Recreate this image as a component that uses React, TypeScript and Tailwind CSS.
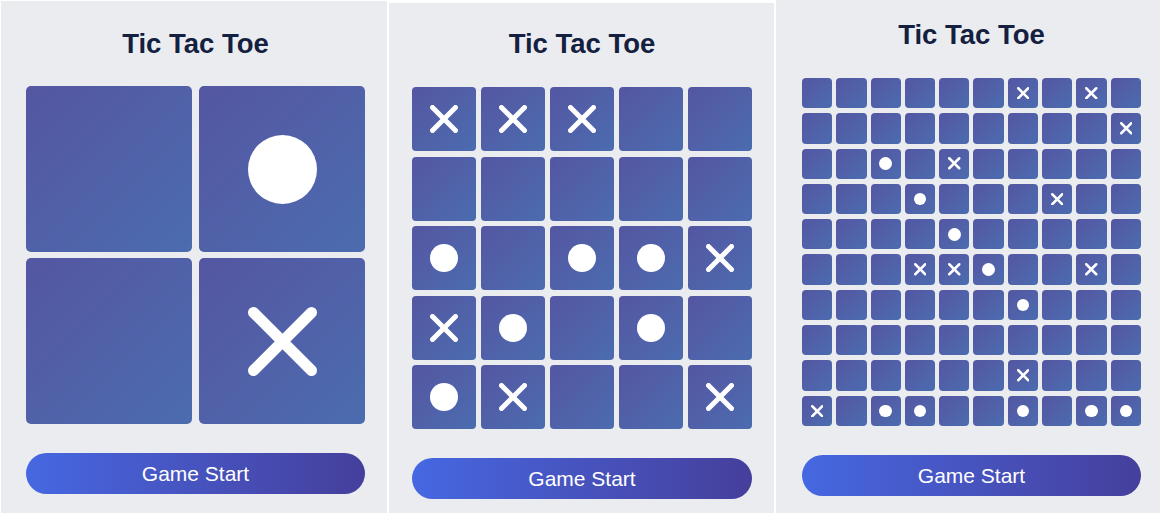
type Mark = '' | 'X' | 'O'

const board2: Mark[] = ['', 'O', '', 'X']

const board5: Mark[] = [
  'X', 'X', 'X', '', '',
  '', '', '', '', '',
  'O', '', 'O', 'O', 'X',
  'X', 'O', '', 'O', '',
  'O', 'X', '', '', 'X',
]

// 10x10 board, marks listed by [row, col]
const xs10 = [[0, 6], [0, 8], [1, 9], [2, 4], [3, 7], [5, 3], [5, 4], [5, 8], [8, 6], [9, 0]]
const os10 = [[2, 2], [3, 3], [4, 4], [5, 5], [6, 6], [9, 2], [9, 3], [9, 6], [9, 8], [9, 9]]
const board10: Mark[] = Array.from({ length: 100 }, (_, i) => {
  const r = Math.floor(i / 10)
  const c = i % 10
  if (xs10.some(([a, b]) => a === r && b === c)) return 'X'
  if (os10.some(([a, b]) => a === r && b === c)) return 'O'
  return ''
})

function Cross({ size, stroke }: { size: number; stroke: number }) {
  const a = stroke / 2
  const b = size - stroke / 2
  return (
    <svg width={size} height={size} viewBox={`0 0 ${size} ${size}`}>
      <g stroke="white" strokeWidth={stroke} strokeLinecap="round">
        <line x1={a} y1={a} x2={b} y2={b} />
        <line x1={b} y1={a} x2={a} y2={b} />
      </g>
    </svg>
  )
}

function Circle({ size }: { size: number }) {
  return <div className="rounded-full bg-white" style={{ width: size, height: size }} />
}

type PanelProps = {
  board: Mark[]
  panelClass: string
  titleClass: string
  gridClass: string
  cellClass: string
  markSize: number
  stroke: number
}

function Panel({ board, panelClass, titleClass, gridClass, cellClass, markSize, stroke }: PanelProps) {
  return (
    <div className={`bg-[#ebecf0] h-[520px] shrink-0 ${panelClass}`}>
      {/* Title */}
      <div className={`flex items-center justify-center ${titleClass}`}>
        <h1 className="text-[27.5px] leading-none font-bold text-[#14203f] font-['Liberation_Sans',Arial,sans-serif]">
          Tic Tac Toe
        </h1>
      </div>

      {/* Board */}
      <div className={`grid ${gridClass}`}>
        {board.map((mark, i) => (
          <div
            key={i}
            className={`flex items-center justify-center bg-linear-to-br from-[#5456a2] to-[#4b6caf] ${cellClass}`}
          >
            {mark === 'X' && <Cross size={markSize} stroke={stroke} />}
            {mark === 'O' && <Circle size={markSize} />}
          </div>
        ))}
      </div>

      {/* Start button */}
      <button className="mt-[29px] w-full h-[41px] rounded-full bg-linear-to-r from-[#4568e2] to-[#453f9c] text-white text-[21px] font-['Liberation_Sans',Arial,sans-serif] flex items-center justify-center">
        Game Start
      </button>
    </div>
  )
}

export default function App() {
  return (
    <div className="w-[1160px] h-[513px] overflow-hidden bg-white flex items-start">
      <Panel
        board={board2}
        panelClass="ml-[1px] mt-[1px] w-[386px] pl-[25px] pr-[22px]"
        titleClass="h-[85px]"
        gridClass="grid-cols-2 gap-x-[7px] gap-y-[6px]"
        cellClass="h-[166px] rounded-[5px]"
        markSize={69}
        stroke={11}
      />
      <Panel
        board={board5}
        panelClass="ml-[2px] mt-[3px] w-[385px] pl-[23px] pr-[22px]"
        titleClass="h-[82px]"
        gridClass="mt-[2px] grid-cols-5 gap-x-[5px] gap-y-[5.5px]"
        cellClass="h-[64px] rounded-[4px]"
        markSize={28}
        stroke={5}
      />
      <Panel
        board={board10}
        panelClass="ml-[2px] mt-0 w-[385px] pl-[26px] pr-[20px]"
        titleClass="h-[70px]"
        gridClass="mt-[8px] grid-cols-10 gap-x-[4px] gap-y-[5px]"
        cellClass="h-[30.3px] rounded-[4px]"
        markSize={12.5}
        stroke={2.5}
      />
    </div>
  )
}
